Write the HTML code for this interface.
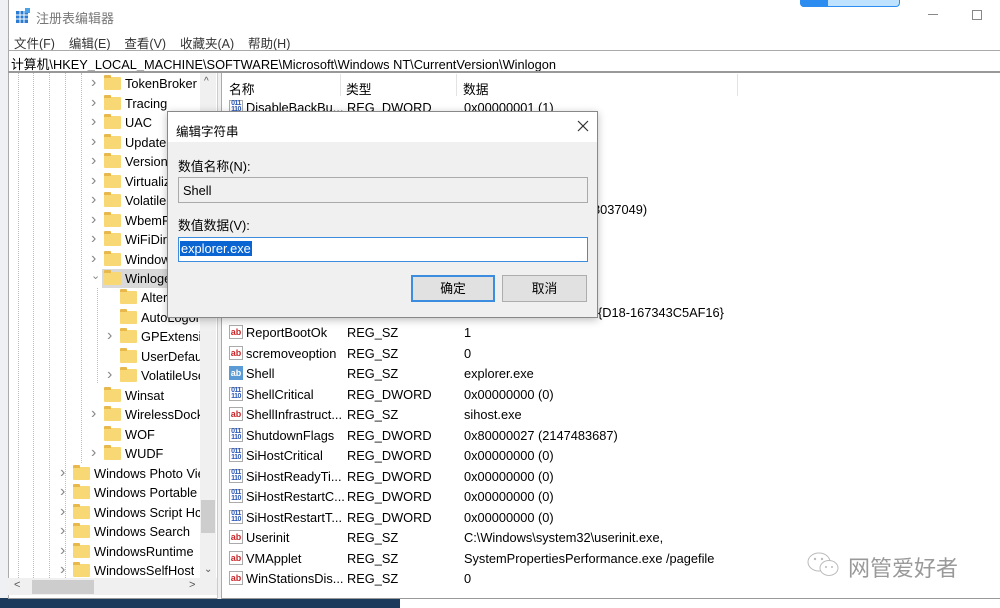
<!DOCTYPE html>
<html><head><meta charset="utf-8"><style>
*{margin:0;padding:0;box-sizing:border-box}
body{width:1000px;height:608px;overflow:hidden;background:#fff;font-family:"Liberation Sans","Noto Sans CJK SC",sans-serif;font-size:12.8px;color:#000;position:relative}
.a{position:absolute;white-space:nowrap}
.fold{position:absolute;width:17px;height:13px;background:#f8d775;border-radius:1px}
.fold:before{content:"";position:absolute;left:0;top:-2px;width:7px;height:3px;background:#e8b94a;border-radius:1px 1px 0 0}
.chev{position:absolute;color:#888;font-size:11px}
.ic{position:absolute;width:14px;height:14px;font-size:9px;font-weight:bold;line-height:13px;text-align:center;border:1px solid #aaa;background:#fff}
.ab{color:#c8262a}
.dw{color:#2a57b8;font-size:7px;line-height:6px;letter-spacing:-0.5px}
</style></head><body>
<div class="a" style="left:0;top:0;width:8px;height:600px;background:#eef0f3"></div>
<div class="a" style="left:0;top:598px;width:400px;height:10px;background:#1b3a5c"></div>
<div class="a" style="left:8px;top:0;width:992px;height:599px;background:#fff;border-left:1px solid #aaa;border-bottom:1px solid #999"></div>
<svg class="a" style="left:15px;top:8px" width="16" height="16"><rect x="1" y="3" width="12" height="12" fill="#2a7bd1"/><g stroke="#fff" stroke-width="1"><line x1="5" y1="3" x2="5" y2="15"/><line x1="9" y1="3" x2="9" y2="15"/><line x1="1" y1="7" x2="13" y2="7"/><line x1="1" y1="11" x2="13" y2="11"/></g><rect x="10" y="0" width="5" height="5" fill="#4aa3e8"/></svg>
<div class="a" style="left:36px;top:8px;color:#777;font-size:13px">注册表编辑器</div>
<div class="a" style="left:800px;top:0;width:100px;height:7px;background:#bfe3ff;border:1px solid #2d8cf0;border-top:0;border-radius:0 0 4px 4px"></div>
<div class="a" style="left:800px;top:0;width:28px;height:7px;background:#2d8cf0;border-radius:0 0 0 4px"></div>
<div class="a" style="left:928px;top:14px;width:10px;height:1px;background:#888"></div>
<div class="a" style="left:972px;top:10px;width:10px;height:10px;border:1px solid #888"></div>
<div class="a" style="left:14px;top:33px;color:#333;font-size:12.5px">文件(F)&nbsp;&nbsp;&nbsp;&nbsp;编辑(E)&nbsp;&nbsp;&nbsp;&nbsp;查看(V)&nbsp;&nbsp;&nbsp;&nbsp;收藏夹(A)&nbsp;&nbsp;&nbsp;&nbsp;帮助(H)</div>
<div class="a" style="left:8px;top:50px;width:992px;height:1px;background:#aaa"></div>
<div class="a" style="left:11px;top:54px;font-size:12.8px">计算机\HKEY_LOCAL_MACHINE\SOFTWARE\Microsoft\Windows NT\CurrentVersion\Winlogon</div>
<div class="a" style="left:8px;top:71px;width:992px;height:2px;background:#999"></div>
<div class="a" style="left:217px;top:73px;width:5px;height:526px;background:#f0f0f0;border-left:1px solid #ccc;border-right:1px solid #aaa"></div>
<div class="a" style="left:200px;top:73px;width:16px;height:505px;background:#f0f0f0"></div>
<div class="a" style="left:201px;top:500px;width:14px;height:33px;background:#cdcdcd"></div>
<div class="a" style="left:204px;top:76px;color:#555;font-size:10px">^</div>
<div class="a" style="left:204px;top:564px;color:#555;font-size:10px">⌄</div>
<div class="a" style="left:8px;top:578px;width:209px;height:17px;background:#f0f0f0"></div>
<div class="a" style="left:32px;top:580px;width:62px;height:14px;background:#cdcdcd"></div>
<div class="a" style="left:14px;top:579px;color:#555;font-size:11px">&lt;</div>
<div class="a" style="left:189px;top:579px;color:#555;font-size:11px">&gt;</div>
<div class="a" style="left:102px;top:269px;width:98px;height:19px;background:#d9d9d9"></div>
<div class="a" style="left:18px;top:73px;height:505px;border-left:1px dotted #bbb"></div>
<div class="a" style="left:33px;top:73px;height:505px;border-left:1px dotted #bbb"></div>
<div class="a" style="left:49px;top:73px;height:505px;border-left:1px dotted #bbb"></div>
<div class="a" style="left:65px;top:73px;height:505px;border-left:1px dotted #bbb"></div>
<div class="a" style="left:81px;top:73px;height:390px;border-left:1px dotted #bbb"></div>
<div class="a" style="left:97px;top:288px;height:95px;border-left:1px dotted #bbb"></div>
<div id="tree"></div>
<div class="a" style="left:229px;top:79px">名称</div>
<div class="a" style="left:346px;top:79px">类型</div>
<div class="a" style="left:463px;top:79px">数据</div>
<div class="a" style="left:340px;top:74px;width:1px;height:22px;background:#e3e3e3"></div>
<div class="a" style="left:456px;top:74px;width:1px;height:22px;background:#e3e3e3"></div>
<div class="a" style="left:737px;top:74px;width:1px;height:22px;background:#e3e3e3"></div>
<div id="rows"></div>
<svg class="a" style="left:806px;top:551px" width="36" height="28"><ellipse cx="13" cy="11" rx="11" ry="9" fill="none" stroke="#bbb"/><ellipse cx="23" cy="17" rx="9" ry="7.5" fill="#fff" stroke="#bbb"/><circle cx="9" cy="8" r="1.2" fill="#bbb"/><circle cx="16" cy="8" r="1.2" fill="#bbb"/><circle cx="20" cy="16" r="1" fill="#bbb"/><circle cx="26" cy="16" r="1" fill="#bbb"/></svg>
<div class="a" style="left:848px;top:551px;font-size:22px;color:#999">网管爱好者</div>
<div class="a" style="left:167px;top:111px;width:431px;height:207px;background:#f0f0f0;border:1px solid #888;box-shadow:0 2px 8px rgba(0,0,0,.25)">
<div style="position:absolute;left:0;top:0;width:429px;height:30px;background:#fff"></div>
<div class="a" style="left:8px;top:9px;font-size:12.5px">编辑字符串</div>
<svg class="a" style="left:409px;top:8px" width="12" height="12"><path d="M1 1L11 11M11 1L1 11" stroke="#333" stroke-width="1.2"/></svg>
<div class="a" style="left:10px;top:44px">数值名称(N):</div>
<div class="a" style="left:10px;top:65px;width:410px;height:26px;background:#f0f0f0;border:1px solid #aaa"></div>
<div class="a" style="left:15px;top:71px">Shell</div>
<div class="a" style="left:10px;top:103px">数值数据(V):</div>
<div class="a" style="left:10px;top:125px;width:410px;height:25px;background:#fff;border:1px solid #3c8ddf"></div>
<div class="a" style="left:12px;top:129px;background:#0a64d2;color:#fff;padding:0 1px">explorer.exe</div>
<div class="a" style="left:243px;top:163px;width:84px;height:27px;background:#e1e1e1;border:2px solid #3c8ddf;text-align:center;line-height:23px">确定</div>
<div class="a" style="left:334px;top:163px;width:85px;height:27px;background:#e1e1e1;border:1px solid #adadad;text-align:center;line-height:25px">取消</div>
</div>
<script>
var t=[[83,1,'TokenBroker'],[103,1,'Tracing'],[122,1,'UAC'],[142,1,'Update'],[161,1,'Version'],[181,1,'Virtualiz'],[200,1,'Volatile'],[220,1,'WbemP'],[239,1,'WiFiDire'],[259,1,'Window'],[278,1,'Winloge','v'],[297,2,'Alter',''],[317,2,'AutoLogor',''],[336,2,'GPExtensic'],[356,2,'UserDefau',''],[375,2,'VolatileUse'],[395,1,'Winsat',''],[414,1,'WirelessDock'],[434,1,'WOF',''],[453,1,'WUDF'],[473,0,'Windows Photo Vie'],[492,0,'Windows Portable'],[512,0,'Windows Script Hc'],[531,0,'Windows Search'],[551,0,'WindowsRuntime'],[570,0,'WindowsSelfHost']];
var h='';t.forEach(function(r){var fx=[73,104,120][r[1]];var ch=r.length>3?r[3]:'›';
if(ch)h+='<div class="chev" style="left:'+(fx-13)+'px;top:'+(r[0]-9)+'px;font-size:'+(ch=='v'?'11px':'16px')+'">'+(ch=='v'?'⌄':'›')+'</div>';
h+='<div class="fold" style="left:'+fx+'px;top:'+(r[0]-6)+'px"></div><div class="a" style="left:'+(fx+21)+'px;top:'+(r[0]-7)+'px;font-size:12.8px;max-width:'+(200-fx-21)+'px;overflow:hidden">'+r[2]+'</div>';});
document.getElementById('tree').innerHTML=h;
var R=[['d','DisableBackBu...','REG_DWORD','0x00000001 (1)'],0,0,0,0,['','','','8037049)'],0,0,0,0,['','','','{D18-167343C5AF16}'],
['s','ReportBootOk','REG_SZ','1'],['s','scremoveoption','REG_SZ','0'],['S','Shell','REG_SZ','explorer.exe'],['d','ShellCritical','REG_DWORD','0x00000000 (0)'],['s','ShellInfrastruct...','REG_SZ','sihost.exe'],['d','ShutdownFlags','REG_DWORD','0x80000027 (2147483687)'],['d','SiHostCritical','REG_DWORD','0x00000000 (0)'],['d','SiHostReadyTi...','REG_DWORD','0x00000000 (0)'],['d','SiHostRestartC...','REG_DWORD','0x00000000 (0)'],['d','SiHostRestartT...','REG_DWORD','0x00000000 (0)'],['s','Userinit','REG_SZ','C:\\Windows\\system32\\userinit.exe,'],['s','VMApplet','REG_SZ','SystemPropertiesPerformance.exe /pagefile'],['s','WinStationsDis...','REG_SZ','0']];
h='';R.forEach(function(r,i){if(!r)return;var y=107+i*20.48;
if(r[0]){var c=r[0]=='d'?'ic dw':'ic ab';var st=r[0]=='S'?'background:#5b9bd5;color:#fff;border-color:#5b9bd5':'';
h+='<div class="'+c+'" style="left:229px;top:'+(y-7)+'px;'+st+'">'+(r[0]=='d'?'011<br>110':'ab')+'</div>';}
if(r[1])h+='<div class="a" style="left:246px;top:'+(y-7)+'px">'+r[1]+'</div><div class="a" style="left:347px;top:'+(y-7)+'px">'+r[2]+'</div>';
var dx=r[0]?464:(i==5?593:598);
h+='<div class="a" style="left:'+dx+'px;top:'+(y-7)+'px">'+r[3]+'</div>';});
document.getElementById('rows').innerHTML=h;
</script>
</body></html>
